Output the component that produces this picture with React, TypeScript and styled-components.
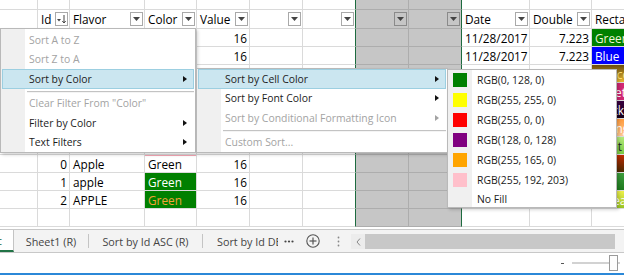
import React from "react";
import styled, { createGlobalStyle, css } from "styled-components";

const GlobalStyle = createGlobalStyle`
  html, body { margin: 0; padding: 0; background: #fff; }
  body { font-family: "Open Sans", "Noto Sans", sans-serif; overflow: hidden; }
`;

const COLS = [38, 32, 75, 52, 53, 53, 53, 53, 53, 68, 62, 60];

const Root = styled.div`
  position: relative;
  width: 624px;
  height: 275px;
  overflow: hidden;
  display: flex;
  flex-direction: column;
  background: #fff;
`;

const Sheet = styled.div`
  flex: none;
  display: grid;
  grid-template-columns: ${COLS.map((c) => c + "px").join(" ")};
  grid-template-rows: 10px 19px repeat(11, 18px);
  height: 229px;
  overflow: hidden;
  font-size: 11.8px;
  color: #000;
`;

type CellProps = {
  $bg?: string;
  $fg?: string;
  $right?: boolean;
  $shade?: boolean;
  $edge?: boolean;
  $topLine?: string;
};

const Cell = styled.div<CellProps>`
  box-sizing: border-box;
  min-width: 0;
  overflow: hidden;
  white-space: nowrap;
  display: flex;
  align-items: center;
  justify-content: ${(p) => (p.$right ? "flex-end" : "flex-start")};
  padding: 0 2px 0 3px;
  background: ${(p) => p.$bg ?? (p.$shade ? "#c6c6c6" : "#fff")};
  color: ${(p) => p.$fg ?? "#000"};
  border-right: 1px solid ${(p) => (p.$edge ? "#1d6b3f" : p.$shade ? "#adadad" : "#dadada")};
  border-bottom: 1px solid ${(p) => (p.$shade ? "#adadad" : "#dadada")};
  ${(p) =>
    p.$topLine &&
    css`
      box-shadow: inset 0 1px 0 ${p.$topLine};
    `}
`;

const HeaderCell = styled(Cell)`
  justify-content: space-between;
  padding-right: 1px;
`;

const FilterButton = styled.div<{ $shade?: boolean }>`
  flex: none;
  box-sizing: border-box;
  width: 13px;
  height: 14px;
  margin-left: auto;
  border: 1px solid ${(p) => (p.$shade ? "#8a8a8a" : "#a9a9a9")};
  background: ${(p) => (p.$shade ? "#c6c6c6" : "#fff")};
  display: flex;
  align-items: center;
  justify-content: center;
`;

const DropArrow = () => (
  <svg width="7" height="4" viewBox="0 0 7 4">
    <polygon points="0,0 7,0 3.5,4" fill="#444" />
  </svg>
);

const SortArrow = () => (
  <svg width="11" height="12" viewBox="0 0 11 12">
    <polygon points="1,6 5,6 3,8.5" fill="#444" />
    <line x1="8" y1="2" x2="8" y2="10" stroke="#444" strokeWidth="1" />
    <polyline points="6.3,8 8,10 9.7,8" fill="none" stroke="#444" strokeWidth="1" />
  </svg>
);

/* ---------- data (cells hidden under the open menus are left empty) ---------- */

type Row = {
  id?: string;
  flavor?: string;
  color?: { text?: string; bg?: string; fg?: string; top?: string };
  value?: string;
  date?: string;
  dbl?: string;
  rect?: { text: string; bg: string; fg: string };
};

const rows: Row[] = [
  { color: { bg: "#008000" }, value: "16", date: "11/28/2017", dbl: "7.223", rect: { text: "Green", bg: "#008000", fg: "#f0f5d8" } },
  { color: { bg: "#008000" }, value: "16", date: "11/28/2017", dbl: "7.223", rect: { text: "Blue", bg: "#0000ff", fg: "#fff" } },
  { rect: { text: "Chocolate", bg: "linear-gradient(#6a4c0c, #e8b832)", fg: "#ffe27a" } },
  { rect: { text: "Violet", bg: "linear-gradient(90deg, #b01e68, #f0307c)", fg: "#fff" } },
  { rect: { text: "Black", bg: "linear-gradient(#3a0040, #14001a)", fg: "#fff" } },
  { rect: { text: "Orange", bg: "linear-gradient(#ff9a3c, #ffc890)", fg: "#fff" } },
  { rect: { text: "Light", bg: "linear-gradient(#b4ea78, #78c844)", fg: "#222" } },
  { id: "0", flavor: "Apple", color: { text: "Green", top: "#f4a6b4" }, value: "16", rect: { text: "Red", bg: "linear-gradient(#c02a00, #4a2a00)", fg: "#fff" } },
  { id: "1", flavor: "apple", color: { text: "Green", bg: "#008000", fg: "#fff" }, value: "16", rect: { text: "Bug", bg: "linear-gradient(#3c9c3c, #1e7a1e)", fg: "#e6ffd0" } },
  { id: "2", flavor: "APPLE", color: { text: "Green", bg: "#008000", fg: "#f2a23a" }, value: "16", rect: { text: "Wheat", bg: "linear-gradient(#eef04a, #98c424)", fg: "#fff" } },
  {},
];

const headers: { label?: string; sort?: boolean; button?: boolean }[] = [
  {},
  { label: "Id", sort: true, button: true },
  { label: "Flavor", button: true },
  { label: "Color", button: true },
  { label: "Value", button: true },
  { button: true },
  { button: true },
  { button: true },
  { button: true },
  { label: "Date", button: true },
  { label: "Double", button: true },
  { label: "Rectangle", button: false },
];

const isShade = (c: number) => c === 7 || c === 8;
const isEdge = (c: number) => c === 6 || c === 8;

function SheetGrid() {
  const cells: React.ReactNode[] = [];
  COLS.forEach((_, c) => {
    cells.push(<Cell key={`t${c}`} $shade={isShade(c)} $edge={isEdge(c)} />);
  });
  headers.forEach((h, c) => {
    cells.push(
      <HeaderCell key={`h${c}`} $shade={isShade(c)} $edge={isEdge(c)}>
        {h.label && <span>{h.label}</span>}
        {h.button && (
          <FilterButton $shade={isShade(c)}>{h.sort ? <SortArrow /> : <DropArrow />}</FilterButton>
        )}
      </HeaderCell>
    );
  });
  rows.forEach((r, i) => {
    const vals: React.ReactNode[] = [
      <Cell key="c0" />,
      <Cell key="c1" $right>{r.id}</Cell>,
      <Cell key="c2">{r.flavor}</Cell>,
      <Cell key="c3" $bg={r.color?.bg} $fg={r.color?.fg} $topLine={r.color?.top}>
        {r.color?.text}
      </Cell>,
      <Cell key="c4" $right>{r.value}</Cell>,
      <Cell key="c5" />,
      <Cell key="c6" $edge />,
      <Cell key="c7" $shade />,
      <Cell key="c8" $shade $edge />,
      <Cell key="c9">{r.date}</Cell>,
      <Cell key="c10" $right>{r.dbl}</Cell>,
      <Cell key="c11" $bg={r.rect?.bg} $fg={r.rect?.fg}>
        {r.rect?.text}
      </Cell>,
    ];
    vals.forEach((v, c) => cells.push(<React.Fragment key={`r${i}-${c}`}>{v}</React.Fragment>));
  });
  return <Sheet>{cells}</Sheet>;
}

/* ---------- menus ---------- */

const Menu = styled.div<{ $left: number; $top: number; $width: number; $padTop?: number }>`
  position: absolute;
  left: ${(p) => p.$left}px;
  top: ${(p) => p.$top}px;
  width: ${(p) => p.$width}px;
  padding-top: ${(p) => p.$padTop ?? 0}px;
  box-sizing: border-box;
  border: 1px solid #b9b9b9;
  background: linear-gradient(to right, #f0f0f0 24px, #fff 24px);
  box-shadow: 2px 2px 3px rgba(0, 0, 0, 0.16);
  font-size: 10.4px;
  color: #1b1b1b;
  white-space: nowrap;
`;

const MenuItem = styled.div<{ $disabled?: boolean; $active?: boolean; $h?: number }>`
  box-sizing: border-box;
  height: ${(p) => p.$h ?? 19.5}px;
  margin: 0 1px;
  padding: 0 6px 0 26px;
  display: flex;
  align-items: center;
  border: 1px solid transparent;
  color: ${(p) => (p.$disabled ? "#a3a3a3" : "#1b1b1b")};
  ${(p) =>
    p.$active &&
    css`
      background: #cbe6f0;
      border-color: #9ccfe1;
    `}
`;

const SwatchItem = styled(MenuItem)`
  padding-left: 3px;
`;

const Swatch = styled.span<{ $color?: string }>`
  flex: none;
  width: 14px;
  height: 14px;
  margin-right: 10px;
  background: ${(p) => p.$color ?? "transparent"};
`;

const SubArrow = styled.span<{ $disabled?: boolean }>`
  margin-left: auto;
  width: 0;
  height: 0;
  border-top: 3.5px solid transparent;
  border-bottom: 3.5px solid transparent;
  border-left: 4px solid ${(p) => (p.$disabled ? "#a3a3a3" : "#111")};
`;

const Separator = styled.div`
  height: 5px;
  margin-left: 26px;
  margin-right: 1px;
  display: flex;
  align-items: center;
  &::after {
    content: "";
    flex: 1;
    height: 1px;
    background: #c3c3c3;
    box-shadow: 0 1px 0 #f4f4f4;
  }
`;

/* ---------- tabs ---------- */

const TabBar = styled.div`
  flex: none;
  height: 24px;
  box-sizing: border-box;
  border-top: 1px solid #c8c8c8;
  border-bottom: 1px solid #c8c8c8;
  background: #f3f3f3;
  display: flex;
  align-items: stretch;
  font-size: 10.8px;
  color: #444;
`;

const ActiveTab = styled.div`
  width: 14px;
  flex: none;
  box-sizing: border-box;
  overflow: hidden;
  display: flex;
  justify-content: flex-end;
  align-items: center;
  padding-right: 11px;
  background: #fff;
  color: #1d6b3f;
  border-right: 1px solid #c4c4c4;
  border-bottom: 2px solid #217346;
  white-space: nowrap;
`;

const Tab = styled.div<{ $w: number }>`
  width: ${(p) => p.$w}px;
  flex: none;
  display: flex;
  align-items: center;
  justify-content: center;
  white-space: nowrap;
  overflow: hidden;
`;

const ClippedTab = styled(Tab)`
  justify-content: flex-start;
  padding-left: 14px;
  box-sizing: border-box;
`;

const TabDivider = styled.div`
  width: 1px;
  flex: none;
  margin: 4px 0 4px;
  background: #c4c4c4;
`;

const IconSlot = styled.div<{ $w: number }>`
  width: ${(p) => p.$w}px;
  flex: none;
  display: flex;
  align-items: center;
  justify-content: center;
`;

const HScroll = styled.div`
  flex: 1;
  display: flex;
  align-items: stretch;
  margin: 4px 9px 3px 0;
  background: #ececec;
`;

const ScrollBtn = styled.div`
  width: 14px;
  flex: none;
  display: flex;
  align-items: center;
  justify-content: center;
`;

const ScrollThumb = styled.div`
  flex: 1;
  background: #c8c8c8;
`;

/* ---------- status ---------- */

const StatusBar = styled.div`
  flex: 1;
  box-sizing: border-box;
  border-bottom: 2px solid #2b88d8;
  display: flex;
  align-items: center;
  justify-content: flex-end;
  padding-right: 4px;
`;

const ZoomMinus = styled.span`
  width: 3px;
  height: 1px;
  background: #555;
  margin-right: 8px;
`;

const ZoomTrack = styled.div`
  position: relative;
  width: 48px;
  height: 2px;
  background: #d2d2d2;
`;

const ZoomThumb = styled.div`
  position: absolute;
  left: 37px;
  top: -7px;
  width: 9px;
  height: 16px;
  box-sizing: border-box;
  background: #fdfdfd;
  border: 1px solid #9a9a9a;
`;

export default function App() {
  return (
    <Root>
      <GlobalStyle />
      <SheetGrid />
      <TabBar>
        <ActiveTab>Sort by Color Desc</ActiveTab>
        <Tab $w={74}>Sheet1 (R)</Tab>
        <TabDivider />
        <Tab $w={113}>Sort by Id ASC (R)</Tab>
        <TabDivider />
        <ClippedTab $w={75}>Sort by Id DESC (R)</ClippedTab>
        <IconSlot $w={22}>
          <svg width="10" height="3" viewBox="0 0 10 3">
            <circle cx="1.5" cy="1.5" r="1.1" fill="#444" />
            <circle cx="5" cy="1.5" r="1.1" fill="#444" />
            <circle cx="8.5" cy="1.5" r="1.1" fill="#444" />
          </svg>
        </IconSlot>
        <IconSlot $w={25}>
          <svg width="14" height="14" viewBox="0 0 14 14">
            <circle cx="7" cy="7" r="6.2" fill="none" stroke="#555" strokeWidth="1.1" />
            <line x1="7" y1="3.5" x2="7" y2="10.5" stroke="#555" strokeWidth="1.2" />
            <line x1="3.5" y1="7" x2="10.5" y2="7" stroke="#555" strokeWidth="1.2" />
          </svg>
        </IconSlot>
        <IconSlot $w={26}>
          <svg width="3" height="11" viewBox="0 0 3 11">
            <circle cx="1.5" cy="1.5" r="0.9" fill="#888" />
            <circle cx="1.5" cy="5.5" r="0.9" fill="#888" />
            <circle cx="1.5" cy="9.5" r="0.9" fill="#888" />
          </svg>
        </IconSlot>
        <HScroll>
          <ScrollBtn>
            <svg width="5" height="8" viewBox="0 0 5 8">
              <polyline points="4,0.5 1,4 4,7.5" fill="none" stroke="#888" strokeWidth="1" />
            </svg>
          </ScrollBtn>
          <ScrollThumb />
        </HScroll>
      </TabBar>
      <StatusBar>
        <ZoomMinus />
        <ZoomTrack>
          <ZoomThumb />
        </ZoomTrack>
      </StatusBar>

      <Menu $left={0} $top={28} $width={196} $padTop={1}>
        <MenuItem $disabled>Sort A to Z</MenuItem>
        <MenuItem $disabled>Sort Z to A</MenuItem>
        <MenuItem $active>
          Sort by Color
          <SubArrow />
        </MenuItem>
        <Separator />
        <MenuItem $disabled>Clear Filter From "Color"</MenuItem>
        <MenuItem>
          Filter by Color
          <SubArrow />
        </MenuItem>
        <MenuItem>
          Text Filters
          <SubArrow />
        </MenuItem>
      </Menu>

      <Menu $left={196} $top={68} $width={252}>
        <MenuItem $active>
          Sort by Cell Color
          <SubArrow />
        </MenuItem>
        <MenuItem>
          Sort by Font Color
          <SubArrow />
        </MenuItem>
        <MenuItem $disabled>
          Sort by Conditional Formatting Icon
          <SubArrow $disabled />
        </MenuItem>
        <Separator />
        <MenuItem $disabled>Custom Sort...</MenuItem>
      </Menu>

      <Menu $left={447} $top={69} $width={170}>
        {[
          ["#008000", "RGB(0, 128, 0)"],
          ["#ffff00", "RGB(255, 255, 0)"],
          ["#ff0000", "RGB(255, 0, 0)"],
          ["#800080", "RGB(128, 0, 128)"],
          ["#ffa500", "RGB(255, 165, 0)"],
          ["#ffc0cb", "RGB(255, 192, 203)"],
        ].map(([c, t]) => (
          <SwatchItem key={t} $h={20}>
            <Swatch $color={c} />
            {t}
          </SwatchItem>
        ))}
        <SwatchItem $h={17}>
          <Swatch />
          No Fill
        </SwatchItem>
      </Menu>
    </Root>
  );
}
